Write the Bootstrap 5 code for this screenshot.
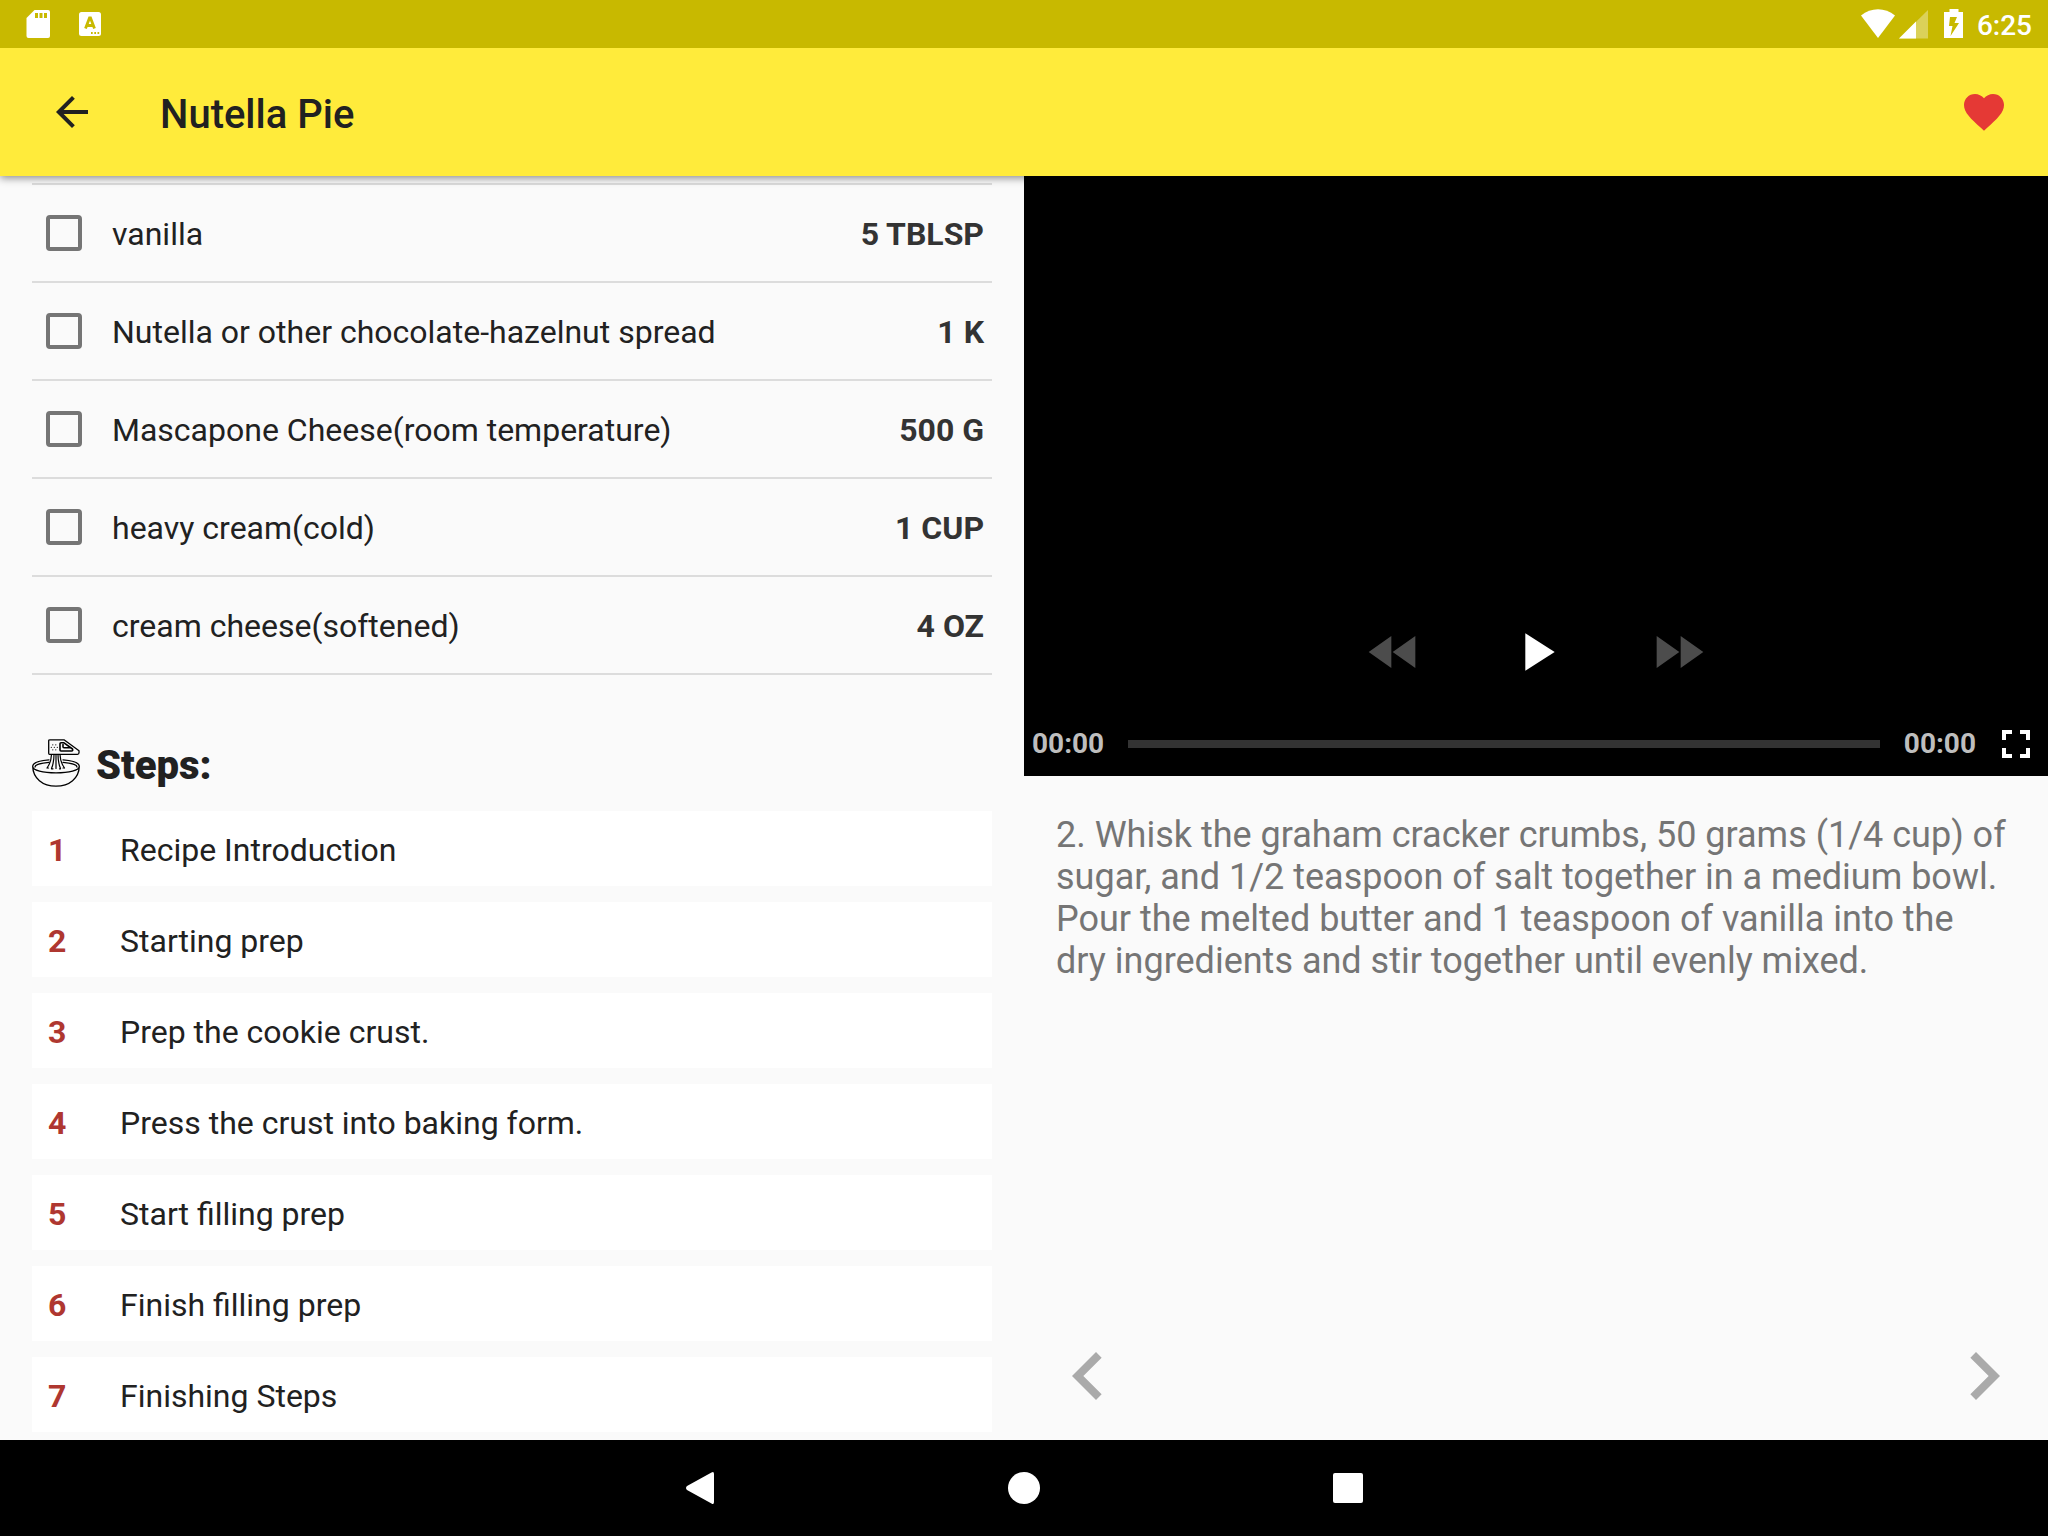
<!DOCTYPE html>
<html lang="en">
<head>
<meta charset="utf-8">
<meta name="viewport" content="width=device-width, initial-scale=1">
<title>Nutella Pie</title>
<link href="https://cdn.jsdelivr.net/npm/bootstrap@5.3.0/dist/css/bootstrap.min.css" rel="stylesheet">
<style>
  body { font-family: Roboto, "Noto Sans", sans-serif; font-size: 32px; line-height: 38px; color: #212121; background: #fafafa; }
  svg { display: block; flex: none; }
  .icon-btn { display: block; padding: 0; border: 0; background: none; color: inherit; }
  .status-bar { height: 48px; padding: 0 16px 0 24px; background: #c8b900; color: #fff; z-index: 2; }
  .status-left { gap: 12px; }
  .clock { margin-left: 13px; padding-top: 4px; font-size: 28px; font-weight: 500; }
  .app-bar { height: 128px; padding: 0 40px 0 48px; background: #ffeb3b; box-shadow: 0 2px 8px rgba(0, 0, 0, .45); z-index: 1; }
  .app-title { margin: 0 0 0 64px; padding-top: 6px; font-size: 40px; line-height: 48px; font-weight: 500; }
  .heart { color: #e53935; }
  .recipe-pane { padding: 7px 32px 8px; }
  .ingredients { border-top: 2px solid #dcdcdc; }
  .ingredient { height: 98px; padding: 0 8px 0 14px; border-bottom: 2px solid #dcdcdc; }
  .ingredient .form-check-input { flex: none; width: 36px; height: 36px; margin: 0 30px 0 0; border: 4px solid #757575; border-radius: 4px; background-color: transparent; }
  .ingredient .form-check-input:checked { background-color: #757575; }
  .ingredient label, .amount { padding-top: 2px; }
  .amount { font-weight: 700; color: #333; }
  .steps-head { margin: 64px 0 24px; gap: 16px; }
  .steps-head h2 { margin: 0; padding-top: 6px; font-size: 40px; line-height: 42px; font-weight: 900; }
  .steps { gap: 16px; }
  .step-link { height: 75px; padding: 2px 16px 0; background: #fff; color: #212121; }
  .step-num { width: 72px; font-weight: 700; color: #af3730; }
  .player { height: 600px; background: #000; color: #fff; z-index: 2; }
  .transport { height: 120px; }
  .transport .icon-btn { width: 142px; }
  .transport .icon-btn svg { margin: 0 auto; }
  .transport .icon-btn:disabled { color: #4c4c4c; }
  .timeline { height: 64px; padding: 0 8px; }
  .time { font-size: 28px; font-weight: 700; color: #bebebe; }
  .seek { appearance: none; -webkit-appearance: none; min-width: 0; height: 8px; margin: 0 24px; background: #333; }
  .seek::-webkit-slider-thumb { -webkit-appearance: none; width: 8px; height: 8px; background: #333; }
  .instruction { margin: 0; padding: 38px 38px 0 32px; font-size: 36px; line-height: 42px; color: #757575; }
  .pager { padding: 16px; color: #aaa; }
  .nav-keys { height: 96px; gap: 276px; background: #000; color: #fff; }
</style>
<script src="https://cdn.jsdelivr.net/npm/bootstrap@5.3.0/dist/js/bootstrap.bundle.min.js"></script>
</head>
<body>
<div class="d-flex flex-column vh-100 overflow-hidden">
  <div class="status-bar position-relative d-flex align-items-center justify-content-between flex-shrink-0">
    <div class="status-left d-flex align-items-center">
      <svg width="28" height="28" viewBox="0 0 28 28"><path fill="#fff" fill-rule="evenodd" d="M10.500 0H24a2 2 0 0 1 2 2v24a2 2 0 0 1-2 2H4.500a2 2 0 0 1-2-2V8zM11 3v5h3V3zm4.500 0v5h3V3zM20 3v5h3V3z"/></svg>
      <svg width="52" height="28" viewBox="0 0 52 28"><rect x="15" y="2" width="22" height="24" rx="2.500" fill="#fff"/><path d="M21.500 18.500 25.500 8h1l4 10.500M23 15.500h6" fill="none" stroke="#c8b900" stroke-width="2.800"/><path d="M27 22h1.700v2H27zm3.300 0H32v2h-1.700zm3.200 0h1.700v2h-1.700z" fill="#c8b900"/></svg>
    </div>
    <div class="d-flex align-items-center">
      <svg width="34" height="30" viewBox="0 0 34 30"><path fill="#fff" d="M0 6.500C10-2 24-2 34 6.500L17 29z"/></svg>
      <svg class="ms-1" width="29" height="30" viewBox="0 0 29 30"><path fill="#fff" fill-opacity=".35" d="M29 1v28.500H0z"/><path fill="#fff" d="M17 12.500v17H0z"/></svg>
      <svg class="ms-3" width="20" height="30" viewBox="0 0 20 30"><path fill="#fff" fill-rule="evenodd" d="M5.500 0h9v3H19v26H0V3h5.500zM6 8 5 17h3.500L6.500 27 15 14h-4.500L13 8z"/></svg>
      <div class="clock">6:25</div>
    </div>
  </div>

  <header class="app-bar position-relative d-flex align-items-center flex-shrink-0">
    <button class="icon-btn" type="button" aria-label="Back"><svg width="48" height="48" viewBox="0 0 24 24" fill="currentColor"><path d="M20 11H7.830l5.590-5.590L12 4l-8 8 8 8 1.410-1.410L7.830 13H20z"/></svg></button>
    <h1 class="app-title">Nutella Pie</h1>
    <button class="icon-btn heart ms-auto" type="button" aria-label="Favourite"><svg width="48" height="48" viewBox="0 0 24 24" fill="currentColor"><path d="M12 21.350l-1.450-1.320C5.400 15.360 2 12.280 2 8.500 2 5.420 4.420 3 7.500 3c1.740 0 3.410.810 4.500 2.090C13.090 3.810 14.760 3 16.500 3 19.580 3 22 5.420 22 8.500c0 3.780-3.400 6.860-8.550 11.540L12 21.350z"/></svg></button>
  </header>

  <main class="row g-0 flex-grow-1 overflow-hidden">
    <section class="recipe-pane col-6 h-100 overflow-hidden">
      <ul class="ingredients list-unstyled m-0">
        <li class="ingredient d-flex align-items-center"><input class="form-check-input" type="checkbox" id="ing1"><label for="ing1">vanilla</label><span class="amount ms-auto">5 TBLSP</span></li>
        <li class="ingredient d-flex align-items-center"><input class="form-check-input" type="checkbox" id="ing2"><label for="ing2">Nutella or other chocolate-hazelnut spread</label><span class="amount ms-auto">1 K</span></li>
        <li class="ingredient d-flex align-items-center"><input class="form-check-input" type="checkbox" id="ing3"><label for="ing3">Mascapone Cheese(room temperature)</label><span class="amount ms-auto">500 G</span></li>
        <li class="ingredient d-flex align-items-center"><input class="form-check-input" type="checkbox" id="ing4"><label for="ing4">heavy cream(cold)</label><span class="amount ms-auto">1 CUP</span></li>
        <li class="ingredient d-flex align-items-center"><input class="form-check-input" type="checkbox" id="ing5"><label for="ing5">cream cheese(softened)</label><span class="amount ms-auto">4 OZ</span></li>
      </ul>

      <div class="steps-head d-flex align-items-center">
        <svg width="48" height="48" viewBox="0 0 48 48" fill="none" stroke="#000" stroke-width="1.300" stroke-linejoin="round" stroke-linecap="round">
          <path d="M18 .8h14l15 11v2q0 1.500-1.500 1.500H17.500q-.8 0-.8-1V2Q16.700.8 18 .8z"/>
          <path stroke-width="1.600" d="M29 3.800h3l8.500 6.200q.8 2-1 2H29q-1 0-1-1V4.800q0-1 1-1zM31 5.500v2.300q0 1 1 1h5.500"/>
          <path stroke-width="1.200" stroke-dasharray="0 3" d="M20.800 5.800h5M19.300 8.300h6.500M20.800 10.800h5"/>
          <path stroke-width="1.200" d="M19.500 15.500c-.3 5-1.500 9.500-4.500 13.500M22 15.500c0 6-.8 10-2.500 14M24 15.500v14M26 15.500c0 6 .8 10 2.500 14M28 15.500c.3 5 1.500 9.500 4.500 13.500M15 29h1.500M19.500 29.800h1.500M27.500 29.800h1M31 29h1.500"/>
          <path d="M17 20.800C7 21.600.7 24 .7 27.500.7 31.300 11 33.800 24 33.800s23.300-2.500 23.300-6.300c0-3.500-6.300-5.900-16.300-6.700M17 23.300c-8.500.8-14 2.500-14 4.700M31 23.300c8.500.8 14 2.500 14 4.700M.7 27.500C1 39 10.500 47.200 24 47.200S47 39 47.300 27.500"/>
        </svg>
        <h2>Steps:</h2>
      </div>

      <nav class="steps d-flex flex-column" aria-label="Steps">
        <a href="#" class="step-link d-flex align-items-center text-decoration-none"><span class="step-num">1</span>Recipe Introduction</a>
        <a href="#" class="step-link d-flex align-items-center text-decoration-none"><span class="step-num">2</span>Starting prep</a>
        <a href="#" class="step-link d-flex align-items-center text-decoration-none"><span class="step-num">3</span>Prep the cookie crust.</a>
        <a href="#" class="step-link d-flex align-items-center text-decoration-none"><span class="step-num">4</span>Press the crust into baking form.</a>
        <a href="#" class="step-link d-flex align-items-center text-decoration-none"><span class="step-num">5</span>Start filling prep</a>
        <a href="#" class="step-link d-flex align-items-center text-decoration-none"><span class="step-num">6</span>Finish filling prep</a>
        <a href="#" class="step-link d-flex align-items-center text-decoration-none"><span class="step-num">7</span>Finishing Steps</a>
      </nav>
    </section>

    <section class="col-6 h-100 d-flex flex-column">
      <div class="player position-relative d-flex flex-column justify-content-end flex-shrink-0">
        <div class="transport d-flex align-items-center justify-content-center">
          <button class="icon-btn" type="button" aria-label="Rewind" disabled><svg width="64" height="64" viewBox="0 0 24 24" fill="currentColor"><path d="M11 18V6l-8.500 6 8.500 6zm.5-6l8.500 6V6l-8.500 6z"/></svg></button>
          <button class="icon-btn" type="button" aria-label="Play"><svg width="64" height="64" viewBox="0 0 24 24" fill="currentColor"><path d="M8 5v14l11-7z"/></svg></button>
          <button class="icon-btn" type="button" aria-label="Fast forward" disabled><svg width="64" height="64" viewBox="0 0 24 24" fill="currentColor"><path d="M4 18l8.500-6L4 6v12zm9-12v12l8.500-6L13 6z"/></svg></button>
        </div>
        <div class="timeline d-flex align-items-center">
          <span class="time">00:00</span>
          <input class="seek flex-grow-1" type="range" min="0" max="100" value="0" aria-label="Seek">
          <span class="time">00:00</span>
          <button class="icon-btn ms-3" type="button" aria-label="Full screen"><svg width="48" height="48" viewBox="0 0 24 24" fill="currentColor"><path d="M7 14H5v5h5v-2H7v-3zm-2-4h2V7h3V5H5v5zm12 7h-3v2h5v-5h-2v3zM14 5v2h3v3h2V5h-5z"/></svg></button>
        </div>
      </div>
      <p class="instruction">2. Whisk the graham cracker crumbs, 50 grams (1/4 cup) of sugar, and 1/2 teaspoon of salt together in a medium bowl. Pour the melted butter and 1 teaspoon of vanilla into the dry ingredients and stir together until evenly mixed.</p>
      <div class="pager d-flex justify-content-between mt-auto">
        <button class="icon-btn" type="button" aria-label="Previous step"><svg width="96" height="96" viewBox="0 0 24 24" fill="currentColor"><path d="M15.410 7.410L14 6l-6 6 6 6 1.410-1.410L10.830 12z"/></svg></button>
        <button class="icon-btn" type="button" aria-label="Next step"><svg width="96" height="96" viewBox="0 0 24 24" fill="currentColor"><path d="M10 6L8.590 7.410 13.170 12l-4.580 4.590L10 18l6-6z"/></svg></button>
      </div>
    </section>
  </main>

  <footer class="nav-keys d-flex align-items-center justify-content-center flex-shrink-0">
    <button class="icon-btn" type="button" aria-label="Back"><svg width="48" height="48" viewBox="0 0 48 48" fill="currentColor"><path d="M35.500 8.500Q38 7 38 10v28q0 3-2.500 1.500L11 26q-2-2 0-4z"/></svg></button>
    <button class="icon-btn" type="button" aria-label="Home"><svg width="48" height="48" viewBox="0 0 48 48" fill="currentColor"><circle cx="24" cy="24" r="16"/></svg></button>
    <button class="icon-btn" type="button" aria-label="Recent apps"><svg width="48" height="48" viewBox="0 0 48 48" fill="currentColor"><rect x="9" y="9" width="30" height="30" rx="2"/></svg></button>
  </footer>
</div>
</body>
</html>
